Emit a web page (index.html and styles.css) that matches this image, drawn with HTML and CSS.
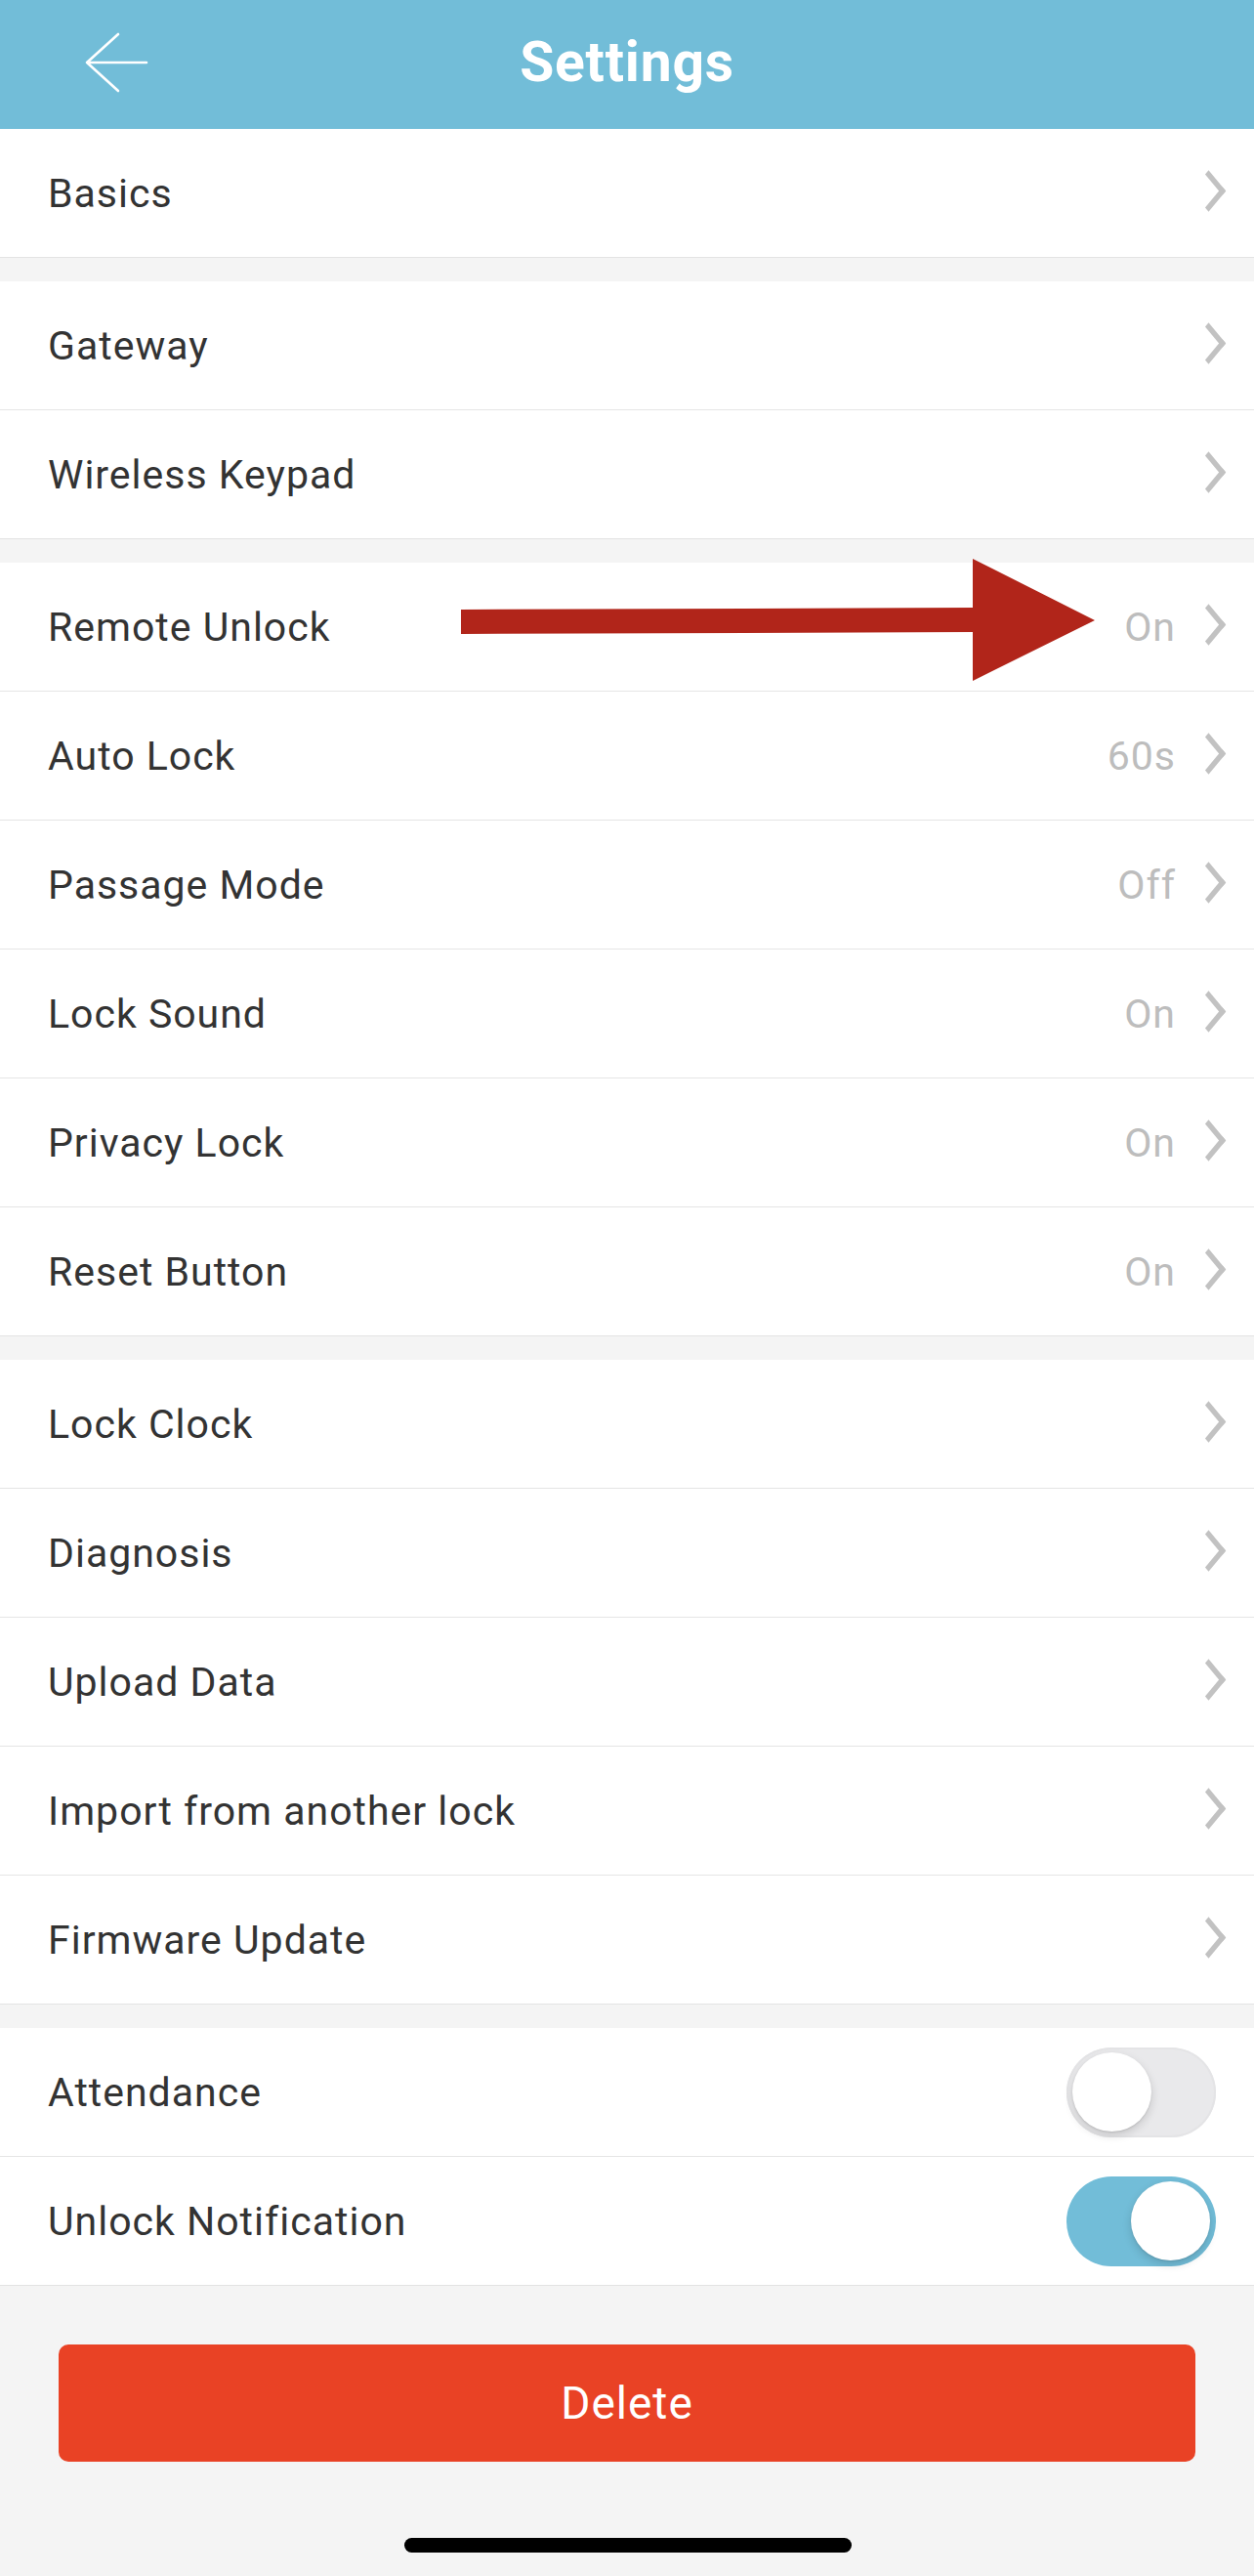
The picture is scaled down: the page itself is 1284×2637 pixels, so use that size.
FILE: index.html
```
<!DOCTYPE html>
<html>
<head>
    <title>Settings</title>
    <meta charset="UTF-8">
    <meta name="viewport" content="width=device-width, initial-scale=1.0">
    <link rel="stylesheet" href="styles.css">
</head>
<body>
    <div class="header">
        <div class="back">
            <svg width="66" height="64" viewBox="0 0 66 64">
                <path d="M35 2 L3 31 L35 60 M3 31 L64 31" fill="none" stroke="#fff" stroke-width="2.6" stroke-linecap="round" stroke-linejoin="round"/>
            </svg>
        </div>
        <h1>Settings</h1>
        <div></div>
    </div>

    <div class="group">
        <div class="row"><span class="label">Basics</span><span class="chev"></span></div>
    </div>

    <div class="group">
        <div class="row"><span class="label">Gateway</span><span class="chev"></span></div>
        <div class="row"><span class="label">Wireless Keypad</span><span class="chev"></span></div>
    </div>

    <div class="group">
        <div class="row"><span class="label">Remote Unlock</span><span class="value">On</span><span class="chev"></span></div>
        <div class="row"><span class="label">Auto Lock</span><span class="value">60s</span><span class="chev"></span></div>
        <div class="row"><span class="label">Passage Mode</span><span class="value">Off</span><span class="chev"></span></div>
        <div class="row"><span class="label">Lock Sound</span><span class="value">On</span><span class="chev"></span></div>
        <div class="row"><span class="label">Privacy Lock</span><span class="value">On</span><span class="chev"></span></div>
        <div class="row"><span class="label">Reset Button</span><span class="value">On</span><span class="chev"></span></div>
    </div>

    <div class="group">
        <div class="row"><span class="label">Lock Clock</span><span class="chev"></span></div>
        <div class="row"><span class="label">Diagnosis</span><span class="chev"></span></div>
        <div class="row"><span class="label">Upload Data</span><span class="chev"></span></div>
        <div class="row"><span class="label">Import from another lock</span><span class="chev"></span></div>
        <div class="row"><span class="label">Firmware Update</span><span class="chev"></span></div>
    </div>

    <div class="group">
        <div class="row"><span class="label">Attendance</span><span class="toggle"><span class="knob"></span></span></div>
        <div class="row"><span class="label">Unlock Notification</span><span class="toggle on"><span class="knob"></span></span></div>
    </div>

    <div class="actions">
        <button class="delete-btn">Delete</button>
    </div>

    <div class="home-bar"></div>

    <!-- annotation arrow pointing at Remote Unlock -->
    <svg class="annotation" width="1284" height="760" viewBox="0 0 1284 760">
        <polygon points="472,624 996,622 996,572 1121,635 996,697 996,647 472,649" fill="#B1251A"/>
    </svg>
</body>
</html>
```

FILE: styles.css
```
body {
    margin: 0;
    background-color: #F4F4F4;
    font-family: Roboto, "Liberation Sans", Arial, sans-serif;
    color: #333;
    min-height: 2637px;
    position: relative;
}
.header {
    height: 132px;
    background-color: #72BDD8;
    display: grid;
    grid-template-columns: 1fr auto 1fr;
    align-items: center;
}
.back {
    padding-left: 86px;
    display: flex;
    align-items: center;
    margin-top: -3px;
}
.header h1 {
    margin: 0;
    color: #fff;
    font-size: 57px;
    font-weight: 700;
    letter-spacing: 0.8px;
    margin-top: -5px;
}
.group {
    background-color: #fff;
    margin-bottom: 24px;
    border-bottom: 1px solid #E3E3E3;
}
.row {
    height: 131px;
    display: flex;
    align-items: center;
    padding: 0 27px 0 49px;
    border-bottom: 1px solid #E5E5E5;
}
.row:last-child {
    border-bottom: none;
}
.label {
    flex: 1;
    font-size: 41px;
    letter-spacing: 1px;
    color: #333;
}
.value {
    font-size: 41px;
    letter-spacing: 1px;
    color: #BDBDBD;
    margin-right: 27px;
}
.chev {
    width: 26px;
    height: 42px;
    position: relative;
}
.chev::before {
    content: "";
    position: absolute;
    left: -6px;
    top: 6px;
    width: 25px;
    height: 25px;
    border-top: 5px solid #C2C2C2;
    border-right: 5px solid #C2C2C2;
    box-sizing: border-box;
    transform: scaleY(1.2) rotate(45deg);
}
.toggle {
    width: 153px;
    height: 92px;
    border-radius: 46px;
    background-color: #E9E9EB;
    margin-right: 12px;
    display: flex;
    align-items: center;
    padding: 0 6px;
    box-sizing: border-box;
    box-shadow: inset 0 0 0 2px #E4E4E6;
}
.toggle.on {
    background-color: #72BDD8;
    justify-content: flex-end;
    box-shadow: none;
}
.knob {
    width: 81px;
    height: 81px;
    border-radius: 50%;
    background-color: #fff;
    box-shadow: 0 4px 10px rgba(0, 0, 0, 0.15), 0 1px 2px rgba(0, 0, 0, 0.1);
}
.actions {
    padding: 36px 60px 0;
}
.delete-btn {
    width: 100%;
    height: 120px;
    border: none;
    border-radius: 10px;
    background-color: #E94225;
    color: #fff;
    font-family: Roboto, "Liberation Sans", Arial, sans-serif;
    font-size: 46px;
    letter-spacing: 1px;
}
.home-bar {
    width: 458px;
    height: 15px;
    border-radius: 8px;
    background-color: #000;
    margin: 78px auto 0;
    position: relative;
    left: 1px;
}
.annotation {
    position: absolute;
    top: 0;
    left: 0;
}
```
